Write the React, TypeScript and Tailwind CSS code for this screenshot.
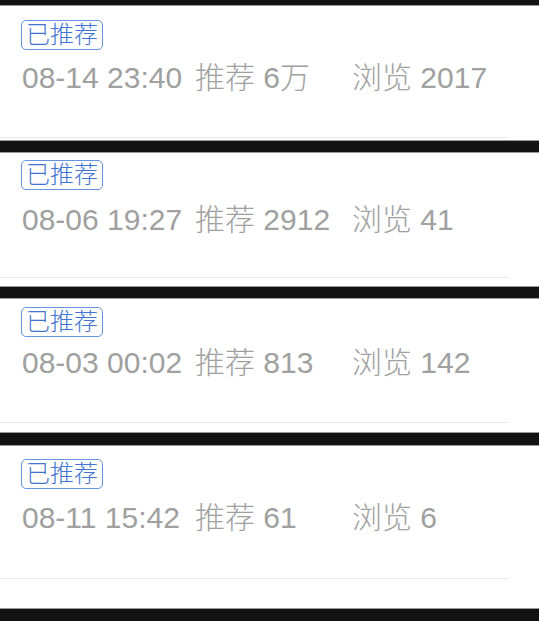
import React from "react";

type Seg = {
  date: string;
  rec: string;
  views: string;
  pt: string;
  mt: string;
  gap: string;
  after: string;
};

const segs: Seg[] = [
  { date: "08-14 23:40", rec: "6万", views: "2017", pt: "pt-[14px]", mt: "mt-[10px]", gap: "mt-[41px]", after: "h-[2px]" },
  { date: "08-06 19:27", rec: "2912", views: "41", pt: "pt-[7px]", mt: "mt-[12px]", gap: "mt-[39px]", after: "h-[8px]" },
  { date: "08-03 00:02", rec: "813", views: "142", pt: "pt-[8px]", mt: "mt-[8px]", gap: "mt-[41px]", after: "h-[9px]" },
  { date: "08-11 15:42", rec: "61", views: "6", pt: "pt-[13px]", mt: "mt-[11px]", gap: "mt-[42px]", after: "h-[29px]" },
];

const bars = ["h-[6px]", "h-[13px]", "h-[13px]", "h-[14px]", "h-[13px]"];

export default function App() {
  return (
    <div
      className="w-[539px] h-[621px] overflow-hidden bg-white"
      style={{ fontFamily: '"Liberation Sans", "Noto Sans CJK SC", sans-serif' }}
    >
      <div className="h-[6px] w-full bg-[#121212] border-b border-[#9a9a9a]" />
      {segs.map((s, i) => (
        <React.Fragment key={i}>
          <div className={`bg-white ${s.pt}`}>
            <div className="flex h-[30px] pl-[21px]">
              <span className="inline-flex h-[30px] items-center rounded-[5px] border-[1.5px] border-[#6593df] px-[4px] text-[24px] font-light leading-none text-[#4274d2]">
                已推荐
              </span>
            </div>
            <div className={`${s.mt} flex h-[36px] items-center overflow-visible pl-[22px] text-[30px] font-light leading-none text-[#a0a0a0]`}>
              <span className="w-[173px] whitespace-nowrap">{s.date}</span>
              <span className="w-[157px] whitespace-nowrap">推荐 {s.rec}</span>
              <span className="whitespace-nowrap">浏览 {s.views}</span>
            </div>
            <div className={`${s.gap} h-px w-[508px] bg-[#e8e8e8]`} />
            <div className={s.after} />
          </div>
          {i < 3 ? (
            <div className={`${bars[i + 1]} w-full bg-[#121212] border-y border-[#9a9a9a]`} />
          ) : (
            <div className="h-[13px] w-full bg-[#121212] border-t border-[#9a9a9a]" />
          )}
        </React.Fragment>
      ))}
    </div>
  );
}
